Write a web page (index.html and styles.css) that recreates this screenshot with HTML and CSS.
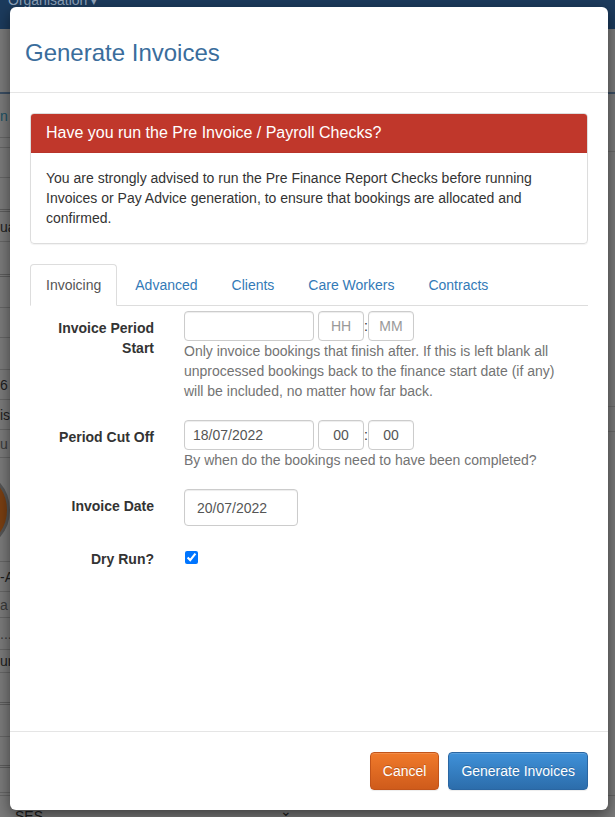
FILE: index.html
```html
<!DOCTYPE html>
<html lang="en">
<head>
<meta charset="utf-8">
<title>Generate Invoices</title>
<link rel="stylesheet" href="styles.css">
</head>
<body>
<div class="page">
  <div class="navbar"><span class="nav-item">Organisation <span class="caret">&#9662;</span></span></div>
  <div class="subnav"></div>
  <div class="main">
    <div class="sidebar">
      <div class="side-row s44 teal">n</div>
      <div class="side-row s10"></div>
      <div class="side-row s30"></div>
      <div class="side-row s34 dbl"></div>
      <div class="side-row s30">ua</div>
      <div class="side-row s35 dbl"></div>
      <div class="side-row s31"></div>
      <div class="side-row s30"></div>
      <div class="side-row s32"></div>
      <div class="side-row s30">6</div>
      <div class="side-row s30">is</div>
      <div class="side-row s28 muted">u</div>
      <div class="side-row s104"><span class="avatar"></span></div>
      <div class="side-row s30">-A</div>
      <div class="side-row s26 muted">a</div>
      <div class="side-row s32 muted">....</div>
      <div class="side-row s23">ur</div>
      <div class="side-row s32 dbl"></div>
      <div class="side-row s32"></div>
      <div class="side-row s31 dbl"></div>
      <div class="side-row s25"></div>
    </div>
    <div class="content">
      <div class="content-block cb-top"></div>
      <div class="content-block cb-mid"></div>
      <div class="content-block cb-low"></div>
    </div>
  </div>
  <div class="select-row">
    <div class="fake-select"><span>SES</span><span class="chev">&#8964;</span></div>
  </div>
</div>

<div class="modal">
  <div class="modal-header">
    <h4 class="modal-title">Generate Invoices</h4>
  </div>
  <div class="modal-body">
    <div class="panel">
      <div class="panel-heading">Have you run the Pre Invoice / Payroll Checks?</div>
      <div class="panel-body">You are strongly advised to run the Pre Finance Report Checks before running Invoices or Pay Advice generation, to ensure that bookings are allocated and confirmed.</div>
    </div>

    <ul class="nav-tabs">
      <li class="active"><a href="#">Invoicing</a></li>
      <li><a href="#">Advanced</a></li>
      <li><a href="#">Clients</a></li>
      <li><a href="#">Care Workers</a></li>
      <li><a href="#">Contracts</a></li>
    </ul>

    <form class="tab-pane">
      <div class="form-group">
        <label class="control-label">Invoice Period Start</label>
        <div class="field">
          <div class="datetime">
            <input class="form-control date-input" type="text" value="">
            <input class="form-control time-input" type="text" placeholder="HH">
            <span class="time-sep">:</span>
            <input class="form-control time-input" type="text" placeholder="MM">
          </div>
          <p class="help-block">Only invoice bookings that finish after. If this is left blank all unprocessed bookings back to the finance start date (if any) will be included, no matter how far back.</p>
        </div>
      </div>

      <div class="form-group">
        <label class="control-label">Period Cut Off</label>
        <div class="field">
          <div class="datetime">
            <input class="form-control date-input" type="text" value="18/07/2022">
            <input class="form-control time-input" type="text" value="00">
            <span class="time-sep">:</span>
            <input class="form-control time-input" type="text" value="00">
          </div>
          <p class="help-block">By when do the bookings need to have been completed?</p>
        </div>
      </div>

      <div class="form-group">
        <label class="control-label">Invoice Date</label>
        <div class="field">
          <input class="form-control invoice-date" type="text" value="20/07/2022">
        </div>
      </div>

      <div class="form-group">
        <label class="control-label check-label">Dry Run?</label>
        <div class="field">
          <input class="checkbox" type="checkbox" checked>
        </div>
      </div>
    </form>
  </div>
  <div class="modal-footer">
    <button class="btn btn-cancel" type="button">Cancel</button>
    <button class="btn btn-primary" type="button">Generate Invoices</button>
  </div>
</div>
</body>
</html>
```
FILE: styles.css
```css
* { box-sizing: border-box; }

body {
  margin: 0;
  width: 615px;
  height: 817px;
  overflow: hidden;
  position: relative;
  background: #7b7b7b;
  font-family: "Liberation Sans", Arial, sans-serif;
  font-size: 14px;
  line-height: 20px;
}

/* ---------- dimmed background page ---------- */
.page {
  height: 817px;
  display: flex;
  flex-direction: column;
}

.navbar {
  height: 29px;
  background: #1c3b5d;
  padding-left: 8px;
  overflow: hidden;
}

.nav-item {
  display: block;
  margin-top: -10px;
  color: #8ea2b9;
  font-size: 14px;
  line-height: 20px;
}

.caret { font-size: 11px; }

.subnav {
  height: 65px;
  border-bottom: 2px solid #3b4e63;
  background: #7b7b7b;
}

.main {
  flex: 1;
  display: flex;
}

.sidebar {
  width: 300px;
  border-right: 1px solid #5f5f5f;
}

.side-row {
  display: flex;
  align-items: center;
  border-bottom: 1px solid #666;
  color: #1e1e1e;
  font-size: 14px;
  overflow: hidden;
}

.side-row.dbl { border-bottom: 3px double #5d5d5d; }
.side-row.teal { color: #1c5264; }
.side-row.muted { color: #3a3a3a; }

.s10 { height: 10px; }
.s23 { height: 23px; }
.s25 { height: 25px; }
.s26 { height: 26px; }
.s28 { height: 28px; }
.s30 { height: 30px; }
.s31 { height: 31px; }
.s32 { height: 32px; }
.s34 { height: 34px; }
.s35 { height: 35px; }
.s44 { height: 44px; }
.s104 { height: 104px; }

.avatar {
  width: 84px;
  height: 84px;
  margin-left: -74px;
  border-radius: 50%;
  background: #7a3f12;
  border: 3px solid #555;
}

.content { flex: 1; }

.content-block { border-bottom: 1px solid #6a6a6a; }
.cb-top { height: 58px; }
.cb-mid { height: 255px; }
.cb-low { height: 25px; }

.select-row {
  height: 22px;
  border-top: 1px solid #666;
  padding: 8px 0 0 3px;
}

.fake-select {
  width: 297px;
  height: 30px;
  display: flex;
  justify-content: space-between;
  padding: 2px 8px 0 12px;
  color: #1c1c1c;
  font-size: 14px;
}

.chev { font-size: 14px; line-height: 10px; }

/* ---------- modal ---------- */
.modal {
  position: absolute;
  top: 7px;
  left: 10px;
  width: 598px;
  height: 803px;
  background: #fff;
  border-radius: 6px;
  box-shadow: 0 5px 15px rgba(0, 0, 0, 0.5);
  display: flex;
  flex-direction: column;
  overflow: hidden;
}

.modal-header {
  padding: 33px 15px 26px;
  border-bottom: 1px solid #e5e5e5;
}

.modal-title {
  margin: 0;
  font-size: 24px;
  line-height: 26px;
  font-weight: normal;
  color: #3a6d9c;
}

.modal-body {
  flex: 1;
  padding: 20px;
}

.panel {
  border: 1px solid #ddd;
  border-radius: 4px;
  margin-bottom: 20px;
  overflow: hidden;
  box-shadow: 0 1px 1px rgba(0, 0, 0, 0.05);
}

.panel-heading {
  background: #c0372b;
  color: #fff;
  padding: 10px 15px;
  font-size: 16px;
  line-height: 18px;
  border-bottom: 1px solid #b8342a;
}

.panel-body {
  padding: 15px;
  color: #333;
  font-size: 14px;
  line-height: 20px;
}

.nav-tabs {
  display: flex;
  list-style: none;
  margin: 0;
  padding: 0;
  border-bottom: 1px solid #ddd;
}

.nav-tabs li {
  margin-bottom: -1px;
  margin-right: 2px;
}

.nav-tabs a {
  display: block;
  padding: 10px 15px;
  line-height: 20px;
  font-size: 14px;
  color: #337ab7;
  text-decoration: none;
  border: 1px solid transparent;
  border-radius: 4px 4px 0 0;
}

.nav-tabs .active a {
  color: #555;
  background: #fff;
  border-color: #ddd #ddd transparent;
}

.tab-pane {
  padding: 5px 15px 0 0;
  margin: 0;
}

.form-group {
  display: grid;
  grid-template-columns: 124px 1fr;
  column-gap: 30px;
  margin-bottom: 19px;
}

.control-label {
  text-align: right;
  font-weight: bold;
  color: #333;
  font-size: 14px;
  line-height: 20px;
  padding-top: 7px;
}

.check-label { padding-top: 4px; }

.datetime {
  display: flex;
  align-items: center;
}

.form-control {
  height: 30px;
  border: 1px solid #ccc;
  border-radius: 4px;
  box-shadow: inset 0 1px 1px rgba(0, 0, 0, 0.075);
  font-family: "Liberation Sans", Arial, sans-serif;
  font-size: 14px;
  color: #555;
  padding: 4px 8px;
  background: #fff;
}

.form-control::placeholder { color: #999; }

.date-input {
  width: 130px;
  margin-right: 4px;
}

.time-input {
  width: 46px;
  padding: 4px 2px;
  text-align: center;
}

.time-sep {
  width: 4px;
  text-align: center;
  color: #333;
  font-size: 14px;
}

.invoice-date {
  width: 114px;
  height: 37px;
  padding: 6px 12px;
}

.help-block {
  margin: 0;
  color: #737373;
  font-size: 14px;
  line-height: 20px;
}

.checkbox {
  width: 13px;
  height: 13px;
  margin: 6px 0 0 1px;
}

.modal-footer {
  border-top: 1px solid #e5e5e5;
  padding: 20px;
  display: flex;
  justify-content: flex-end;
  gap: 9px;
}

.btn {
  font-family: "Liberation Sans", Arial, sans-serif;
  font-size: 14px;
  line-height: 20px;
  padding: 8px 12px;
  border-radius: 4px;
  border: 1px solid;
  color: #fff;
  text-shadow: 0 -1px 0 rgba(0, 0, 0, 0.2);
  box-shadow: inset 0 1px 0 rgba(255, 255, 255, 0.15), 0 1px 1px rgba(0, 0, 0, 0.075);
}

.btn-cancel {
  background: linear-gradient(#f07a2b, #cf5b1b);
  border-color: #c2541a;
}

.btn-primary {
  background: linear-gradient(#3f91d9, #2c6dab);
  border-color: #2a66a2;
}
```
